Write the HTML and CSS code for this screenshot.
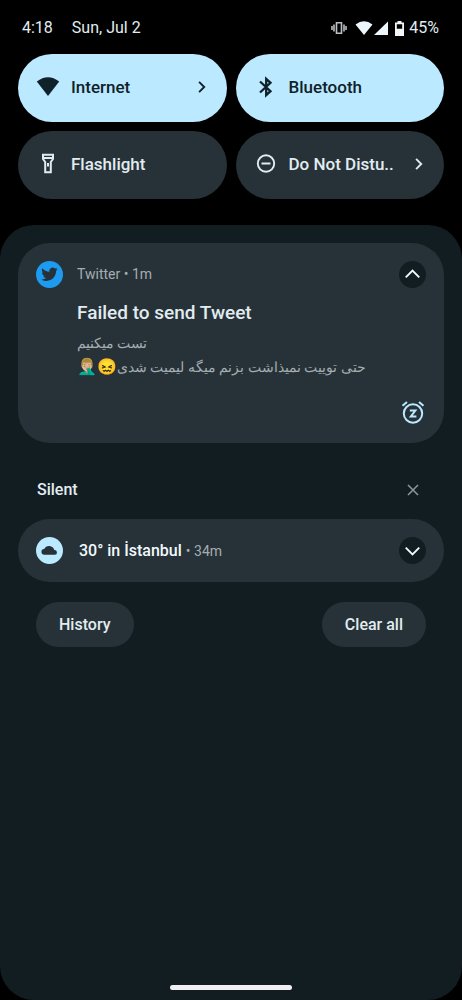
FILE: index.html
```html
<!DOCTYPE html>
<html lang="en">
<head>
<meta charset="utf-8">
<meta name="viewport" content="width=device-width, initial-scale=1">
<title>Notifications</title>
<link rel="stylesheet" href="styles.css">
</head>
<body>
<header class="status">
  <div class="status-left"><time>4:18</time><span>Sun, Jul 2</span></div>
  <div class="status-right">
    <svg class="i-vibrate" viewBox="0 0 16 14" aria-hidden="true"><path d="M1 5v4M3 3.500v7M13 3.500v7M15 5v4M5.500 1.800h5v10.400h-5z" fill="none" stroke="#b9bfc2" stroke-width="1.600"/></svg>
    <svg class="i-signal" viewBox="0 0 34 14" aria-hidden="true"><path d="M.5 3.600Q9 -3.200 17.500 3.600L9 14zM33 .5V14H19z" fill="#ecf6fb"/></svg>
    <svg class="i-battery" viewBox="0 0 9 15" aria-hidden="true"><path d="M2.500 0h4v1.500H9V15H0V1.500h2.500zM1.800 3.300v4.400h5.400V3.300z" fill="#f2f6f8" fill-rule="evenodd"/></svg>
    <span>45%</span>
  </div>
</header>
<section class="tiles" aria-label="Quick settings">
  <button class="tile on">
    <svg class="icon" viewBox="0 0 24 24" aria-hidden="true"><path d="M.8 6.500Q12-2 23.200 6.500L12 21z" fill="currentColor"/></svg>
    <span class="label">Internet</span>
    <svg class="chev" viewBox="0 0 12 12" aria-hidden="true"><path d="M3.500 1.600 7.900 6l-4.400 4.400"/></svg>
  </button>
  <button class="tile on">
    <svg class="icon" viewBox="0 0 24 24" aria-hidden="true"><path d="M6 6.500 16.500 16.200 12.200 20.200V3.800L16.500 7.800 6 17.500" fill="none" stroke="currentColor" stroke-width="2.300"/></svg>
    <span class="label">Bluetooth</span>
  </button>
  <button class="tile">
    <svg class="icon" viewBox="0 0 24 24" aria-hidden="true"><path d="M7 2.700h10V7l-2.200 3v10.300H9.200V10L7 7zM7 6.100h10M12 11v3.500" fill="none" stroke="currentColor" stroke-width="2"/></svg>
    <span class="label">Flashlight</span>
  </button>
  <button class="tile">
    <svg class="icon" viewBox="0 0 24 24" aria-hidden="true"><path d="M7.500 11.500h9M20.200 11.500a8.200 8.200 0 1 1-16.400 0 8.200 8.200 0 0 1 16.400 0z" fill="none" stroke="currentColor" stroke-width="1.900"/></svg>
    <span class="label">Do Not Distu..</span>
    <svg class="chev" viewBox="0 0 12 12" aria-hidden="true"><path d="M3.500 1.600 7.900 6l-4.400 4.400"/></svg>
  </button>
</section>
<main class="shade">
  <article class="card tweet">
    <svg class="badge" viewBox="0 0 28 28" aria-hidden="true"><circle cx="14" cy="14" r="14" fill="#1d9bf0"/><g transform="translate(5.500 5.200) scale(.71)"><path fill="#263238" d="M23.950 4.570a10 10 0 0 1-2.820.770 4.960 4.960 0 0 0 2.160-2.720c-.95.550-2 .960-3.130 1.180a4.920 4.920 0 0 0-8.380 4.480C7.690 8.100 4.070 6.130 1.640 3.160a4.920 4.920 0 0 0 1.520 6.570 4.900 4.900 0 0 1-2.230-.61v.06a4.920 4.920 0 0 0 3.950 4.830 5 5 0 0 1-2.210.08 4.940 4.940 0 0 0 4.600 3.420A9.870 9.870 0 0 1 0 19.540a14 14 0 0 0 7.550 2.210c9.050 0 14-7.500 14-13.980 0-.21 0-.42-.02-.63a9.940 9.940 0 0 0 2.420-2.570z"/></g></svg>
    <div class="body">
      <p class="meta">Twitter • 1m</p>
      <h2>Failed to send Tweet</h2>
      <div class="message" dir="rtl" lang="fa"><p>تست میکنیم</p><p>حتی توییت نمیذاشت بزنم میگه لیمیت شدی<span class="emoji">😖🤦🏼‍♂️</span></p></div>
    </div>
    <div class="actions">
      <button class="round" aria-label="Collapse"><svg viewBox="0 0 28 28"><path d="M7 17 14 10l7 7"/></svg></button>
      <button class="snooze" aria-label="Snooze"><svg viewBox="0 0 24 24"><circle cx="12" cy="12.500" r="9.200"/><path d="M1.500 4.800 6 1M22.500 4.800 18 1M8.800 9.500h5.600L9.800 15.500h5.600"/></svg></button>
    </div>
  </article>
  <div class="section-head">
    <h3>Silent</h3>
    <button class="close" aria-label="Clear silent notifications"><svg viewBox="0 0 12 12"><path d="m1 1 10 10M11 1 1 11"/></svg></button>
  </div>
  <article class="card weather">
    <svg class="badge" viewBox="0 0 28 28" aria-hidden="true"><circle cx="14" cy="14" r="14" fill="#bbe9ff"/><path d="M8.800 18.500a3 3 0 0 1-.3-6 5.600 5.600 0 0 1 10.400 1 2.500 2.500 0 0 1 .6 5z" fill="#263238"/></svg>
    <p class="summary"><strong>30° in İstanbul</strong> <span class="meta">• 34m</span></p>
    <button class="round" aria-label="Expand"><svg viewBox="0 0 28 28"><path d="m7 11 7 7 7-7"/></svg></button>
  </article>
  <footer class="footer"><button class="pill">History</button><button class="pill">Clear all</button></footer>
  <div class="home"></div>
</main>
</body>
</html>
```
FILE: styles.css
```css
* { box-sizing: border-box; margin: 0; padding: 0; }
body {
  min-height: 100vh;
  display: flex;
  flex-direction: column;
  background: #000;
  color: #e2ecf0;
  font-family: Roboto, "Noto Sans", sans-serif;
  font-size: 16px;
  line-height: 20px;
}
button { border: 0; background: none; color: inherit; font: inherit; cursor: pointer; }
svg { display: block; flex: none; }
.status { display: flex; justify-content: space-between; align-items: center; height: 54px; padding: 2px 23px 0 22px; }
.status-left, .status-right { display: flex; align-items: center; }
.status-left { gap: 19px; }
.i-vibrate { width: 16px; height: 14px; margin-right: 8px; }
.i-signal { width: 34px; height: 14px; margin-right: 6px; }
.i-battery { width: 9px; height: 15px; margin-right: 5px; }
.tiles { display: grid; grid-template-columns: 1fr 1fr; gap: 9px; padding: 0 18px; }
.tile {
  display: flex;
  align-items: center;
  gap: 11px;
  height: 68px;
  padding: 0 18px 2px;
  border-radius: 34px;
  background: #263238;
  text-align: left;
  font-size: 17px;
  font-weight: 500;
}
.tile.on { background: #bbe9ff; color: #0f2129; }
.icon { width: 24px; height: 24px; }
.label { flex: 1; white-space: nowrap; }
.chev { width: 14px; height: 14px; fill: none; stroke: currentColor; stroke-width: 1.600; }
.shade {
  flex: 1;
  display: flex;
  flex-direction: column;
  margin-top: 26px;
  padding: 18px 18px 10px;
  border-radius: 34px;
  background: #121d22;
}
.card { display: flex; background: #263238; border-radius: 32px; padding: 18px; }
.badge { width: 27px; height: 27px; }
.tweet { min-height: 200px; gap: 14px; }
.body { flex: 1; }
.meta { font-size: 14px; font-weight: 400; color: #a4adb1; }
.tweet .meta { line-height: 27px; }
h2 { font-size: 19px; line-height: 24px; font-weight: 500; margin-top: 13px; }
.message { margin-top: 6px; font-size: 14px; line-height: 24px; color: #a4adb1; text-align: left; }
.emoji { font-size: 16px; line-height: 20px; }
.actions { display: flex; flex-direction: column; align-items: center; justify-content: space-between; }
.round { width: 27px; height: 27px; border-radius: 50%; background: #121d22; }
.round svg { width: 27px; height: 27px; fill: none; stroke: #f2f9fc; stroke-width: 2; }
.snooze svg { width: 24px; height: 24px; fill: none; stroke: #bbe9ff; stroke-width: 2; }
.section-head { display: flex; align-items: center; justify-content: space-between; padding: 37px 25px 19px 19px; }
h3 { font-size: 16px; font-weight: 500; }
.close svg { width: 12px; height: 12px; fill: none; stroke: #8d979c; stroke-width: 1.500; }
.weather { align-items: center; gap: 16px; }
.summary { flex: 1; }
.summary strong { font-weight: 500; color: #f2f9fc; }
.footer { display: flex; justify-content: space-between; padding: 20px 18px; }
.pill { height: 45px; padding: 0 23px; border-radius: 23px; background: #263238; font-weight: 500; }
.home { width: 122px; height: 5px; margin: auto auto 0; border-radius: 3px; background: #f0eef1; }
```
